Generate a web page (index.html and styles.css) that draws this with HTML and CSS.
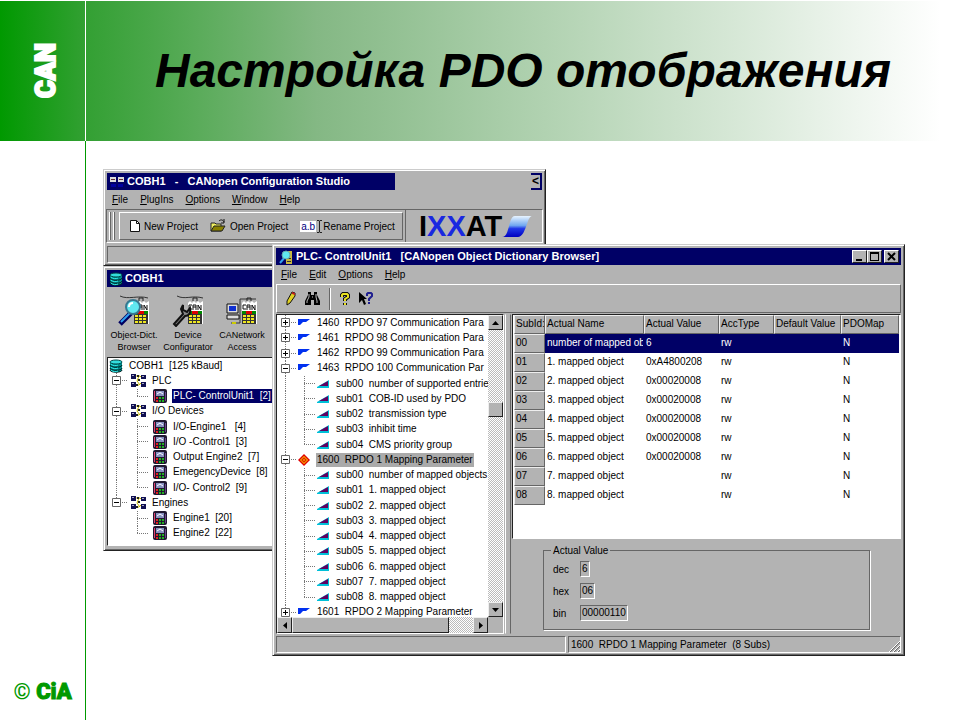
FILE: index.html
```
<!DOCTYPE html>
<html lang="ru">
<head>
<meta charset="utf-8">
<title>Настройка PDO отображения</title>
<link rel="stylesheet" href="styles.css">
</head>
<body>
<svg class="defs" aria-hidden="true">
  <defs>
    <symbol id="flag" viewBox="0 0 12 8"><path d="M0 0h12L8 3H5L2 6H0z" fill="#0030f0"/></symbol>
    <symbol id="sub" viewBox="0 0 12 8"><path d="M0 7L12 0v8H0z" fill="#00c0d8"/><path d="M2 6l9-5v5z" fill="#600060"/></symbol>
    <symbol id="diamond" viewBox="0 0 12 12"><path d="M6 0l6 6-6 6-6-6z" fill="#e00000"/><path d="M6 2l4 4-4 4-4-4z" fill="#ffe000"/><path d="M6 3l3 3-3 3-3-3z" fill="#e02000"/><path d="M6 5l1 1-1 1-1-1z" fill="#ffe000"/></symbol>
    <symbol id="plus" viewBox="0 0 9 9"><path d="M.5.5h8v8h-8z" fill="#fff" stroke="#666"/><path d="M2 4h5v1H2zM4 2h1v5H4z"/></symbol>
    <symbol id="minus" viewBox="0 0 9 9"><path d="M.5.5h8v8h-8z" fill="#fff" stroke="#666"/><path d="M2 4h5v1H2z"/></symbol>
    <symbol id="disks" viewBox="0 0 14 14"><path d="M1 3v8c0 3 12 3 12 0V3z" fill="#088"/><path d="M1 6c0 3 12 3 12 0M1 9c0 3 12 3 12 0M1 11c0 3 12 3 12 0" fill="none" stroke="#022"/><path d="M2 8c2 2 5 2 7 1M2 5c2 2 5 2 7 1M2 11c2 2 5 2 7 1" fill="none" stroke="#3ee"/><ellipse cx="7" cy="3" rx="6" ry="2" fill="#3dd" stroke="#044"/></symbol>
    <symbol id="group" viewBox="0 0 15 14"><path d="M5 2h4l2 2M4 11h4l2-2M8 2L6 7l3 4" fill="none" stroke="#c8b800"/><path d="M0 0h5v5H0zM10 1h5v4h-5zM0 8h5v5H0zM10 8h5v5h-5z" fill="#101050"/><path d="M1 1h2v1H1zM11 2h2v1h-2zM1 9h2v1H1zM11 9h2v1h-2z" fill="#aac"/><path d="M6 1h2v2H6zM5 10h2v2H5zM7 5h2v2H7z" fill="#222"/></symbol>
    <symbol id="device" viewBox="0 0 14 14"><rect width="14" height="14" rx="2" fill="#201830"/><path d="M1 2h1v10H1z" fill="#e04070"/><path d="M3 2h8v5H3z" fill="#8890c0"/><path d="M4 5l3-2 3 2" fill="none" stroke="#fff"/><path d="M3 8h2v2H3zM3 11h2v2H3z" fill="#e02020"/><path d="M6 8h2v2H6zM6 11h2v2H6zM9 8h2v2H9zM9 11h2v2H9z" fill="#20b020"/><path d="M12 3h1v9h-1z" fill="#664488"/></symbol>
    <symbol id="module" viewBox="0 0 17 30"><path d="M1 7l2-2 2 2 2-2 2 2 2-2 2 2 3-2v23H1z" fill="#fff"/><path d="M1 18h14v10H1z" fill="#333"/><path d="M2 19h3v2H2zM6 19h3v2H6zM10 19h3v2h-3zM2 22h3v2H2zM6 22h3v2H6zM10 22h3v2h-3zM2 25h3v2H2zM6 25h3v2H6zM10 25h3v2h-3z" fill="#f0e820"/><path d="M1 15h4v3H1zM11 15h4v3h-4z" fill="#080"/><path d="M5 15h6v3H5z" fill="#d00"/><path d="M5 9H2v4h3M6 14V9h3v5M6 11h3M11 14V9l3 5V9" fill="none" stroke="#111"/><path d="M6 5V2h4v3" fill="none" stroke="#222"/></symbol>
    <symbol id="up" viewBox="0 0 7 4"><path d="M3.500 0L7 4H0z"/></symbol>
  </defs>
</svg>

<header class="banner">
  <div class="brand"><span>CAN</span></div>
  <h1>Настройка PDO отображения</h1>
</header>
<aside class="rail"><span>© <b>CiA</b></span></aside>

<main class="desktop">
  <section class="window studio">
    <div class="titlebar">
      <div class="caption"><svg width="16" height="14" viewBox="0 0 16 14"><path d="M1 2h6v5H1zM9 2h6v5H9z" fill="#ddd"/><path d="M2 4h4v1H2zM10 4h4v1h-4z" fill="#633"/><path d="M2 9h5v3H2zM9 9h5v3H9z" fill="#0000a0"/></svg>COBH1   -   CANopen Configuration Studio</div>
      <div class="cut"><button aria-label="Close">&lt;</button></div>
    </div>
    <nav class="menu"><button><u>F</u>ile</button><button><u>P</u>lugIns</button><button><u>O</u>ptions</button><button><u>W</u>indow</button><button><u>H</u>elp</button></nav>
    <div class="rebar">
      <div class="grip"></div>
      <div class="tools">
        <button><svg width="12" height="14" viewBox="0 0 12 14"><path d="M1.500 1.500h6l3 3v8h-9z" fill="#fff" stroke="#111"/><path d="M7.500 1.500v3h3" fill="none" stroke="#111"/></svg>New Project</button>
        <button><svg width="17" height="14" viewBox="0 0 17 14"><path d="M1 12V4h4l1 1h5v7z" fill="#f0f060" stroke="#222"/><path d="M1 12l3-5h11l-3 5z" fill="#888000" stroke="#222"/><path d="M9 2c2-2 4-1 5 1M14 0v4h-3" fill="none" stroke="#111"/></svg>Open Project</button>
        <button><span class="ab">a.b</span><svg width="5" height="13" viewBox="0 0 5 13"><path d="M0 .5h2l.5 1 .5-1h2M2.500 1v11M0 12.500h2l.5-1 .5 1h2" fill="none" stroke="#222"/></svg>Rename Project</button>
      </div>
      <div class="logo">I<span>XX</span>AT<svg width="31" height="23" viewBox="0 0 31 23"><defs><linearGradient id="swoosh" x2="0" y2="1"><stop stop-color="#e8f4ff"/><stop offset=".45" stop-color="#70a8f0"/><stop offset=".6" stop-color="#2038e8"/><stop offset="1" stop-color="#0000c0"/></linearGradient></defs><path d="M13 1h17c-5 0-6 21-14 21H0C8 22 6 1 13 1z" fill="url(#swoosh)"/></svg></div>
    </div>
    <div class="status"><span></span></div>
  </section>

  <section class="window project">
    <div class="titlebar"><div class="caption"><svg width="14" height="14"><use href="#disks"/></svg>COBH1</div></div>
    <div class="bigtools">
      <button><svg width="34" height="32" viewBox="0 0 32 32"><path d="M2 1c8 4 18-1 28 2" fill="none" stroke="#333"/><use href="#module" x="15" y="1" width="17" height="30"/><path d="M2 29l11-11" stroke="#000060" stroke-width="5"/><path d="M3 27l9-9" stroke="#30a0f0" stroke-width="2"/><circle cx="15" cy="12" r="7" fill="#60e8f0" stroke="#387890" stroke-width="2"/><path d="M11 12c0-3 2-4 4-4" fill="none" stroke="#fff" stroke-width="2"/></svg>Object-Dict.<br>Browser</button>
      <button><svg width="34" height="32" viewBox="0 0 32 32"><path d="M5 1c8 4 15-1 26 2" fill="none" stroke="#333"/><use href="#module" x="15" y="1" width="17" height="30"/><path d="M2 29l9-10-2-5 2-4v5l4 2 3-4c1 5-1 8-5 8L4 31z" fill="#888" stroke="#111" stroke-width="2"/></svg>Device<br>Configurator</button>
      <button><svg width="34" height="32" viewBox="0 0 32 32"><path d="M5 28h9V4h16" fill="none" stroke="#333"/><use href="#module" x="15" y="1" width="17" height="30"/><path d="M1 9h11v9H1z" fill="#ddd" stroke="#111"/><path d="M3 11h7v5H3z" fill="#1030d0"/><path d="M1 20h12v4H1z" fill="#ddd" stroke="#111"/><path d="M6 28h4" stroke="#cc0" stroke-width="2"/></svg>CANetwork<br>Access</button>
      <button>Vi</button>
    </div>
    <div class="tree nodes">
      <div class="row"><svg class="root" width="14" height="14"><use href="#disks"/></svg><span class="label">COBH1  [125 kBaud]</span></div>
      <div class="row"><span class="join"><svg width="9" height="9"><use href="#minus"/></svg></span><svg width="15" height="14"><use href="#group"/></svg><span class="label">PLC</span></div>
      <div class="row"><span class="line"></span><span class="branch last"></span><svg width="14" height="14"><use href="#device"/></svg><span class="label active">PLC- ControlUnit1  [2]</span></div>
      <div class="row"><span class="join"><svg width="9" height="9"><use href="#minus"/></svg></span><svg width="15" height="14"><use href="#group"/></svg><span class="label">I/O Devices</span></div>
      <div class="row"><span class="line"></span><span class="branch"></span><svg width="14" height="14"><use href="#device"/></svg><span class="label">I/O-Engine1   [4]</span></div>
      <div class="row"><span class="line"></span><span class="branch"></span><svg width="14" height="14"><use href="#device"/></svg><span class="label">I/O -Control1  [3]</span></div>
      <div class="row"><span class="line"></span><span class="branch"></span><svg width="14" height="14"><use href="#device"/></svg><span class="label">Output Engine2  [7]</span></div>
      <div class="row"><span class="line"></span><span class="branch"></span><svg width="14" height="14"><use href="#device"/></svg><span class="label">EmegencyDevice  [8]</span></div>
      <div class="row"><span class="line"></span><span class="branch last"></span><svg width="14" height="14"><use href="#device"/></svg><span class="label">I/O- Control2  [9]</span></div>
      <div class="row"><span class="join last"><svg width="9" height="9"><use href="#minus"/></svg></span><svg width="15" height="14"><use href="#group"/></svg><span class="label">Engines</span></div>
      <div class="row"><span class="line none"></span><span class="branch"></span><svg width="14" height="14"><use href="#device"/></svg><span class="label">Engine1  [20]</span></div>
      <div class="row"><span class="line none"></span><span class="branch last"></span><svg width="14" height="14"><use href="#device"/></svg><span class="label">Engine2  [22]</span></div>
    </div>
  </section>

  <section class="window browser">
    <div class="titlebar">
      <div class="caption"><svg width="16" height="16" viewBox="0 0 16 16"><path d="M8 2h6v13H8z" fill="#c8b840"/><path d="M9 9h4v1H9zM9 12h4v1H9z" fill="#333"/><path d="M2 14l5-6" stroke="#30a0f0" stroke-width="2"/><circle cx="8" cy="6" r="4" fill="#60e8f0" stroke="#6aa"/></svg>PLC- ControlUnit1   [CANopen Object Dictionary Browser]</div>
      <div class="controls">
        <button aria-label="Minimize"><svg width="9" height="9"><path d="M1 7h6v2H1z"/></svg></button>
        <button aria-label="Maximize"><svg width="9" height="9"><path d="M0 0h9v9H0zM1 2v6h7V2z" fill-rule="evenodd"/></svg></button>
        <button aria-label="Close"><svg width="9" height="9"><path d="M1 1l7 7M8 1L1 8" stroke="#000" stroke-width="2"/></svg></button>
      </div>
    </div>
    <nav class="menu"><button><u>F</u>ile</button><button><u>E</u>dit</button><button><u>O</u>ptions</button><button><u>H</u>elp</button></nav>
    <div class="toolbar">
      <button aria-label="Edit"><svg width="10" height="15" viewBox="0 0 10 15"><path d="M6 1l3 1v3L4 12l-3 2V10z" fill="#e0d020" stroke="#111"/><path d="M6 1l3 1v2L6 3z" fill="#c02020"/></svg></button>
      <button aria-label="Find"><svg width="15" height="13" viewBox="0 0 15 13"><path d="M3 0h3v3h3V0h3v3l3 6v4H9V8H6v5H0V9l3-6z"/><path d="M4 2v3L2 9v2M11 2v3l1 4v2M7 5h1" fill="none" stroke="#bbb"/></svg></button>
      <i></i>
      <button aria-label="Help"><svg width="10" height="14" viewBox="0 0 10 14"><path d="M2 5V3l1-1h4l1 1v2L5 7v2M5 11v2" fill="none" stroke="#111" stroke-width="4"/><path d="M2 5V3l1-1h4l1 1v2L5 7v2M5 11v2" fill="none" stroke="#e8e020" stroke-width="2"/></svg></button>
      <button aria-label="Context help"><svg width="15" height="14" viewBox="0 0 15 14"><path d="M0 0l8 7H5l2 5-2 1-2-5-3 3z"/><path d="M8 4V2l1-1h3l1 1v2l-3 3v2M10 10v2" fill="none" stroke="#202090" stroke-width="2"/></svg></button>
    </div>
    <div class="split">
      <div class="pane">
        <div class="tree dict">
          <div class="row"><span class="join"><svg width="9" height="9"><use href="#plus"/></svg></span><svg width="12" height="8"><use href="#flag"/></svg><span class="label">1460  RPDO 97 Communication Para</span></div>
          <div class="row"><span class="join"><svg width="9" height="9"><use href="#plus"/></svg></span><svg width="12" height="8"><use href="#flag"/></svg><span class="label">1461  RPDO 98 Communication Para</span></div>
          <div class="row"><span class="join"><svg width="9" height="9"><use href="#plus"/></svg></span><svg width="12" height="8"><use href="#flag"/></svg><span class="label">1462  RPDO 99 Communication Para</span></div>
          <div class="row"><span class="join"><svg width="9" height="9"><use href="#minus"/></svg></span><svg width="12" height="8"><use href="#flag"/></svg><span class="label">1463  RPDO 100 Communication Par</span></div>
          <div class="row"><span class="line"></span><span class="branch"></span><svg width="12" height="8"><use href="#sub"/></svg><span class="label">sub00  number of supported entrie</span></div>
          <div class="row"><span class="line"></span><span class="branch"></span><svg width="12" height="8"><use href="#sub"/></svg><span class="label">sub01  COB-ID used by PDO</span></div>
          <div class="row"><span class="line"></span><span class="branch"></span><svg width="12" height="8"><use href="#sub"/></svg><span class="label">sub02  transmission type</span></div>
          <div class="row"><span class="line"></span><span class="branch"></span><svg width="12" height="8"><use href="#sub"/></svg><span class="label">sub03  inhibit time</span></div>
          <div class="row"><span class="line"></span><span class="branch last"></span><svg width="12" height="8"><use href="#sub"/></svg><span class="label">sub04  CMS priority group</span></div>
          <div class="row"><span class="join"><svg width="9" height="9"><use href="#minus"/></svg></span><svg width="12" height="12"><use href="#diamond"/></svg><span class="label picked">1600  RPDO 1 Mapping Parameter</span></div>
          <div class="row"><span class="line"></span><span class="branch"></span><svg width="12" height="8"><use href="#sub"/></svg><span class="label">sub00  number of mapped objects</span></div>
          <div class="row"><span class="line"></span><span class="branch"></span><svg width="12" height="8"><use href="#sub"/></svg><span class="label">sub01  1. mapped object</span></div>
          <div class="row"><span class="line"></span><span class="branch"></span><svg width="12" height="8"><use href="#sub"/></svg><span class="label">sub02  2. mapped object</span></div>
          <div class="row"><span class="line"></span><span class="branch"></span><svg width="12" height="8"><use href="#sub"/></svg><span class="label">sub03  3. mapped object</span></div>
          <div class="row"><span class="line"></span><span class="branch"></span><svg width="12" height="8"><use href="#sub"/></svg><span class="label">sub04  4. mapped object</span></div>
          <div class="row"><span class="line"></span><span class="branch"></span><svg width="12" height="8"><use href="#sub"/></svg><span class="label">sub05  5. mapped object</span></div>
          <div class="row"><span class="line"></span><span class="branch"></span><svg width="12" height="8"><use href="#sub"/></svg><span class="label">sub06  6. mapped object</span></div>
          <div class="row"><span class="line"></span><span class="branch"></span><svg width="12" height="8"><use href="#sub"/></svg><span class="label">sub07  7. mapped object</span></div>
          <div class="row"><span class="line"></span><span class="branch last"></span><svg width="12" height="8"><use href="#sub"/></svg><span class="label">sub08  8. mapped object</span></div>
          <div class="row"><span class="join"><svg width="9" height="9"><use href="#plus"/></svg></span><svg width="12" height="8"><use href="#flag"/></svg><span class="label">1601  RPDO 2 Mapping Parameter</span></div>
        </div>
        <div class="vscroll"><button aria-label="Scroll up"><svg width="7" height="4"><use href="#up"/></svg></button><span class="before"></span><span class="thumb"></span><span class="after"></span><button aria-label="Scroll down"><svg class="flip" width="7" height="4"><use href="#up"/></svg></button></div>
        <div class="hscroll"><button aria-label="Scroll left"><svg width="4" height="7"><path d="M4 0v7L0 3.500z"/></svg></button><span class="thumb"></span><span class="after"></span><button aria-label="Scroll right"><svg width="4" height="7"><path d="M0 0v7l4-3.500z"/></svg></button></div>
        <div class="corner"></div>
      </div>
      <div class="splitter"></div>
      <div class="details">
        <div class="grid">
          <table>
            <colgroup><col class="c-id"><col class="c-name"><col class="c-val"><col class="c-acc"><col class="c-def"><col></colgroup>
            <thead><tr><th>SubId:</th><th>Actual Name</th><th>Actual Value</th><th>AccType</th><th>Default Value</th><th>PDOMap</th></tr></thead>
            <tbody>
              <tr class="chosen"><th>00</th><td>number of mapped ob</td><td>6</td><td>rw</td><td></td><td>N</td></tr>
              <tr><th>01</th><td>1. mapped object</td><td>0xA4800208</td><td>rw</td><td></td><td>N</td></tr>
              <tr><th>02</th><td>2. mapped object</td><td>0x00020008</td><td>rw</td><td></td><td>N</td></tr>
              <tr><th>03</th><td>3. mapped object</td><td>0x00020008</td><td>rw</td><td></td><td>N</td></tr>
              <tr><th>04</th><td>4. mapped object</td><td>0x00020008</td><td>rw</td><td></td><td>N</td></tr>
              <tr><th>05</th><td>5. mapped object</td><td>0x00020008</td><td>rw</td><td></td><td>N</td></tr>
              <tr><th>06</th><td>6. mapped object</td><td>0x00020008</td><td>rw</td><td></td><td>N</td></tr>
              <tr><th>07</th><td>7. mapped object</td><td></td><td>rw</td><td></td><td>N</td></tr>
              <tr><th>08</th><td>8. mapped object</td><td></td><td>rw</td><td></td><td>N</td></tr>
            </tbody>
          </table>
        </div>
        <fieldset>
          <legend>Actual Value</legend>
          <div class="field"><span>dec</span><output>6</output></div>
          <div class="field"><span>hex</span><output>06</output></div>
          <div class="field"><span>bin</span><output>00000110</output></div>
        </fieldset>
      </div>
    </div>
    <div class="status"><span></span><span>1600  RPDO 1 Mapping Parameter  (8 Subs)<svg width="12" height="12" viewBox="0 0 12 12"><path d="M1 12L12 1M5 12l7-7M9 12l3-3" stroke="#fff"/><path d="M2 12L12 2M6 12l6-6M10 12l2-2" stroke="#666"/></svg></span></div>
  </section>
</main>
</body>
</html>
```
FILE: styles.css
```
:root {
  --face: #b3b3b3;
  --navy: #000066;
  --dark: #666;
  --green: #009900;
}

* { box-sizing: border-box; }

body {
  margin: 0;
  min-height: 100vh;
  display: grid;
  grid-template-columns: 86px 1fr;
  grid-template-rows: 141px 1fr;
  background: #fff;
  color: #000;
  font: 10px/15px "Liberation Sans", Arial, sans-serif;
  overflow: hidden;
}

svg { display: block; flex: none; }
.defs { position: absolute; width: 0; height: 0; }

button {
  margin: 0;
  padding: 0;
  border: 0;
  background: none;
  color: inherit;
  font: inherit;
  white-space: pre;
}

/* Slide frame */
.banner {
  grid-column: 1 / -1;
  display: grid;
  grid-template-columns: 86px 1fr;
  border-top: 1px solid #fff;
  background: linear-gradient(90deg, #009900, #33a033 9%, #84b884 33%, #fff 98%);
}

.brand {
  display: flex;
  align-items: center;
  justify-content: center;
  padding-left: 6px;
  border-right: 1px solid #fff;
}

.brand span {
  color: #fff;
  font: 900 27px/32px Roboto, sans-serif;
  -webkit-text-stroke: 2px #fff;
  writing-mode: vertical-rl;
  transform: rotate(180deg);
}

.banner h1 {
  margin: 0;
  align-self: center;
  text-align: center;
  font: italic bold 48px/56px "Liberation Sans", Arial, sans-serif;
}

.rail {
  display: flex;
  align-items: flex-end;
  justify-content: center;
  padding-bottom: 16px;
  border-right: 1px solid var(--green);
  color: var(--green);
  font: bold 22px/24px Roboto, sans-serif;
}

.rail b { font-weight: 900; -webkit-text-stroke: 1px var(--green); }

.desktop { position: relative; }

/* Windows */
.window {
  position: absolute;
  display: flex;
  flex-direction: column;
  padding: 2px;
  background: var(--face);
  border: 1px solid;
  border-color: #ccc #222 #222 #ccc;
  box-shadow: inset 1px 1px #fff, inset -1px -1px var(--dark);
}

.studio { left: 17px; right: 414px; top: 28px; height: 97px; }
.project { left: 17px; right: 414px; top: 125px; height: 285px; }
.browser { left: 186px; right: 55px; top: 103px; height: 412px; }

.titlebar {
  flex: none;
  display: flex;
  justify-content: space-between;
  height: 17px;
  margin: 1px;
  background: var(--navy);
}

.caption {
  display: flex;
  align-items: center;
  gap: 2px;
  padding-left: 2px;
  color: #fff;
  font-size: 11px;
  font-weight: bold;
  white-space: pre;
}

.studio .titlebar { background: none; }
.studio .caption { width: 288px; background: var(--navy); }
.cut { padding: 2px 2px 2px 0; background: var(--navy); }
.cut button { display: block; width: 9px; height: 13px; background: var(--face); font: bold 12px/13px "Liberation Sans", sans-serif; }

.controls { display: flex; padding: 2px; }
.controls button {
  display: grid;
  place-items: center;
  width: 15px;
  background: var(--face);
  border: 1px solid;
  border-color: #fff #222 #222 #fff;
}
.controls button:last-child { margin-left: 2px; }

.menu { flex: none; display: flex; align-items: flex-start; gap: 12px; height: 18px; padding: 1px 0 0 6px; }

.rebar { flex: none; display: flex; height: 34px; border: 1px solid; border-color: var(--dark) #fff #fff var(--dark); }
.grip { flex: none; width: 8px; margin: 2px; background: repeating-linear-gradient(90deg, #fff 0 1px, var(--dark) 1px 2px, var(--face) 2px 4px); }
.tools {
  flex: 1;
  display: flex;
  align-items: center;
  gap: 12px;
  margin: 2px 2px 2px 0;
  padding-left: 9px;
  border: 1px solid;
  border-color: #fff var(--dark) var(--dark) #fff;
}
.tools button { display: flex; align-items: center; gap: 3px; }
.ab { padding: 0 1px; background: #fff; color: #000080; line-height: 11px; }
.tools button:last-child { gap: 1px; }
.logo {
  flex: none;
  display: flex;
  align-items: center;
  width: 137px;
  padding-left: 13px;
  border-left: 1px solid var(--dark);
  font: bold 29px/30px "Liberation Sans", Arial, sans-serif;
}
.logo span { color: #1a28e0; }

.status { flex: none; display: flex; gap: 2px; height: 17px; margin: auto 1px 0; }
.status span {
  flex: 1;
  display: flex;
  justify-content: space-between;
  align-items: center;
  padding-left: 2px;
  border: 1px solid;
  border-color: var(--dark) #fff #fff var(--dark);
  white-space: pre;
}
.browser .status span:first-child { flex: 0 0 290px; }
.browser .status svg { align-self: flex-end; }

.bigtools { flex: none; display: flex; gap: 4px; height: 67px; padding: 5px 3px 0; }
.bigtools button {
  width: 50px;
  display: block;
  font-size: 9px;
  line-height: 12px;
}
.bigtools svg { margin: 0 auto 2px; }
.bigtools button:last-child { width: 12px; padding-top: 34px; align-self: flex-start; }

/* Trees */
.tree {
  display: grid;
  grid-auto-rows: 1fr;
  background: #fff;
  overflow: hidden;
}
.row { display: flex; align-items: center; min-height: 0; min-width: 0; }
.label { padding: 0 1px; line-height: 14px; white-space: pre; }
.picked { background: #aaa; }
.active { background: var(--navy); color: #fff; }

.join, .line, .branch {
  flex: none;
  align-self: stretch;
  display: flex;
  align-items: center;
  --v: repeating-linear-gradient(#777 0 1px, transparent 1px 2px);
  --h: repeating-linear-gradient(90deg, #777 0 1px, transparent 1px 2px);
  background-repeat: no-repeat;
}
.join { width: 21px; padding-left: 4px; background-image: var(--v), var(--h); background-position: 8px 0, 8px 50%; background-size: 1px 100%, 11px 1px; }
.line { width: 21px; background-image: var(--v); background-position: 8px 0; background-size: 1px 100%; }
.branch { width: 19px; background-image: var(--v), var(--h); background-position: 6px 0, 6px 50%; background-size: 1px 100%, 11px 1px; }
.join.last, .branch.last { background-size: 1px 50%, 11px 1px; }
.line.none { background-image: none; }

.nodes {
  height: 190px;
  margin: 2px 1px;
  padding-bottom: 4px;
  border: 1px solid;
  border-color: #222 #fff #fff #222;
}
.nodes .root { margin-left: 1px; }
.nodes .label { margin-left: 5px; }
.nodes .join { width: 23px; }
.nodes .line { width: 23px; }
.nodes .branch { width: 22px; }

/* Object dictionary browser */
.toolbar {
  flex: none;
  display: flex;
  align-items: center;
  gap: 9px;
  height: 29px;
  margin: 0 1px;
  padding-left: 9px;
  border: 1px solid;
  border-color: #fff var(--dark) var(--dark) #fff;
}
.toolbar i { width: 2px; height: 22px; border-left: 1px solid var(--dark); border-right: 1px solid #fff; }

.split { flex: 1; display: flex; min-height: 0; margin: 1px 1px 2px; }
.pane {
  flex: none;
  display: grid;
  grid-template: 1fr 16px / 1fr 15px;
  width: 228px;
  border: 1px solid;
  border-color: #222 #fff #fff #222;
}
.dict { margin-bottom: -3px; }
.dict .label { margin-left: 6px; }

.vscroll, .hscroll {
  display: flex;
  background: repeating-conic-gradient(#fff 0 25%, #bbb 0 50%) 0 0 / 2px 2px;
}
.hscroll { z-index: 1; }
.vscroll { flex-direction: column; }
.vscroll button, .hscroll button, .thumb {
  flex: none;
  display: grid;
  place-items: center;
  width: 15px;
  height: 15px;
  background: var(--face);
  border: 1px solid;
  border-color: #eee #222 #222 #eee;
}
.hscroll button { height: 16px; }
.vscroll .before { flex: 72; }
.vscroll .after { flex: 186; }
.hscroll .thumb { flex: 155; height: 16px; }
.hscroll .after { flex: 24; }
.flip { transform: rotate(180deg); }
.corner { background: var(--face); }

.splitter { width: 6px; margin: 0 1px; border: 1px solid; border-color: transparent var(--dark) transparent #fff; }

.details { flex: 1; min-width: 0; display: flex; flex-direction: column; }
.grid {
  flex: none;
  height: 225px;
  padding: 0 1px;
  background: #fff;
  border: 1px solid;
  border-color: #222 #fff #fff #222;
}
table { width: 100%; table-layout: fixed; border-collapse: separate; border-spacing: 0; }
.c-id { width: 31px; }
.c-name { width: 99px; }
.c-val { width: 75px; }
.c-acc { width: 55px; }
.c-def { width: 67px; }
th, td {
  height: 19px;
  padding: 0 0 2px 1px;
  border: 1px solid transparent;
  font-weight: normal;
  line-height: 15px;
  text-align: left;
  white-space: nowrap;
  overflow: hidden;
}
th { background: var(--face); border-color: #eee var(--dark) var(--dark) #eee; }
.chosen td { background: var(--navy); color: #fff; }

fieldset {
  display: flex;
  flex-direction: column;
  gap: 6px;
  margin: 4px 31px 0;
  padding: 3px 7px 8px;
  border: 1px solid var(--dark);
  box-shadow: 1px 1px #fff;
}
legend { padding: 0 2px; line-height: 15px; }
.field { display: flex; align-items: center; }
.field span { width: 29px; padding-left: 2px; }
output { padding: 0 1px; line-height: 14px; border: 1px solid; border-color: var(--dark) #fff #fff var(--dark); }
```
